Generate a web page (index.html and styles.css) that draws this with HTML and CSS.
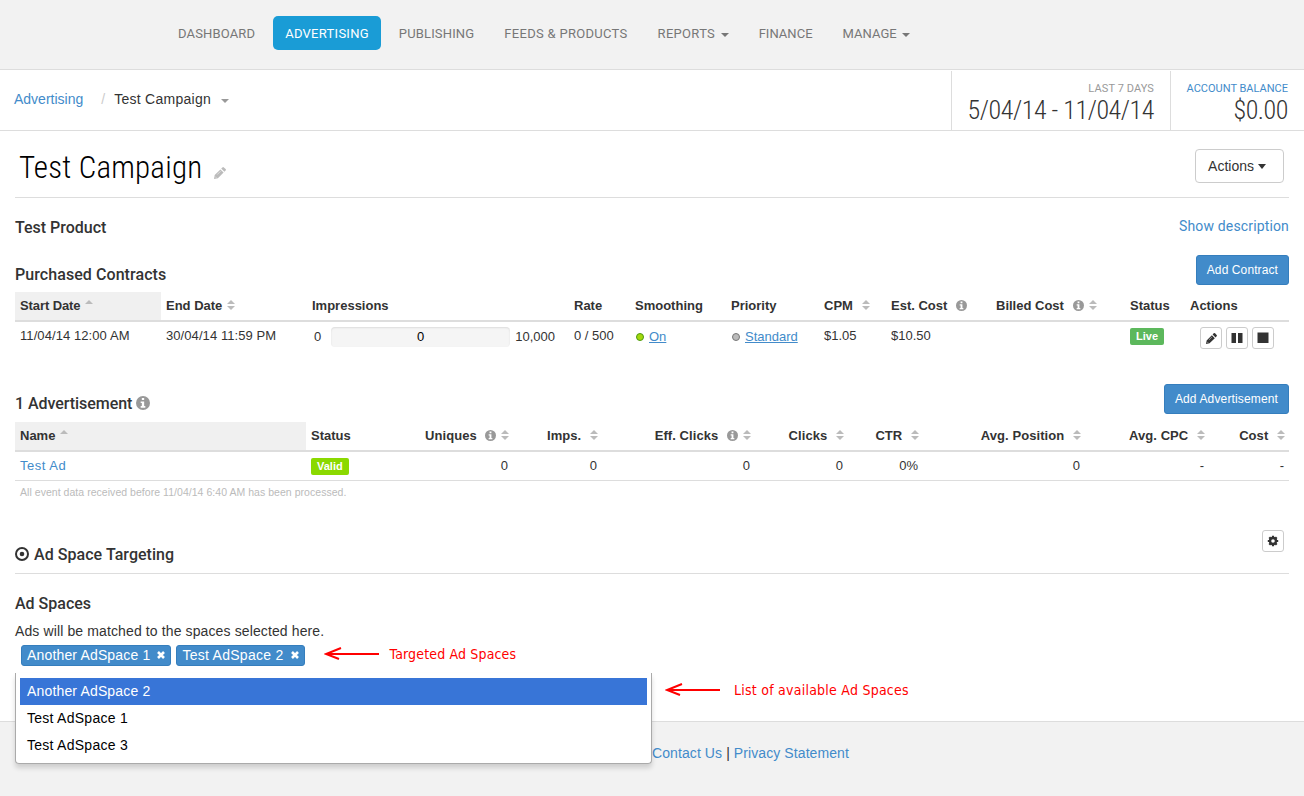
FILE: index.html
```html
<!DOCTYPE html>
<html lang="en">
<head>
    <meta charset="UTF-8">
    <meta name="viewport" content="width=device-width, initial-scale=1.0">
    <title>Test Campaign</title>
    <link rel="stylesheet" href="styles.css">
</head>
<body>
    <svg class="sprite">
        <symbol id="pencil" viewBox="0 0 12 12">
            <path d="M0 12l.7-3.9L6.4 2.4l3.2 3.2L3.9 11.3zM7.2 1.6L8.4.4q.8-.7 1.5 0l1.7 1.7q.7.7 0 1.5l-1.2 1.2z"/>
            <path d="M1.2 9.6l1.2 1.2M3.2 7.6l3.4-3.4" stroke="#fff" stroke-width=".5"/>
        </symbol>
        <symbol id="info" viewBox="0 0 12 12">
            <circle cx="6" cy="6" r="6"/>
            <path fill="#fff" d="M5 1.7h2v1.8H5zM4 4.7h3v3.9h1v1.4H4V8.6h1V6H4z"/>
        </symbol>
        <symbol id="sort" viewBox="0 0 8 10">
            <path d="M0 4l4-4 4 4zM0 6h8l-4 4z"/>
        </symbol>
        <symbol id="asc" viewBox="0 0 8 10">
            <path d="M0 4l4-4 4 4z"/>
        </symbol>
        <symbol id="close" viewBox="0 0 8 8">
            <path d="M1 1l6 6M7 1L1 7" stroke="#fff" stroke-width="2.6"/>
        </symbol>
        <symbol id="arrow" viewBox="0 0 56 16">
            <path d="M55 8H2M17 2L2 8l13 5" fill="none" stroke="#f00" stroke-width="2"/>
        </symbol>
    </svg>

    <nav class="navbar">
        <a>DASHBOARD</a>
        <a class="active">ADVERTISING</a>
        <a>PUBLISHING</a>
        <a class="wide">FEEDS &amp; PRODUCTS</a>
        <a class="wide">REPORTS <i class="caret"></i></a>
        <a class="tight">FINANCE</a>
        <a class="tight">MANAGE <i class="caret"></i></a>
    </nav>

    <div class="subbar">
        <div class="breadcrumb">
            <a class="link">Advertising</a>
            <span class="slash">/</span>
            <span class="current">Test Campaign</span>
            <i class="caret"></i>
        </div>
        <div class="stat stat-date">
            <small>LAST 7 DAYS</small>
            <strong>5/04/14 - 11/04/14</strong>
        </div>
        <div class="stat stat-balance">
            <small class="link">ACCOUNT BALANCE</small>
            <strong>$0.00</strong>
        </div>
    </div>

    <main class="content">
        <header class="page-header">
            <h1>Test Campaign</h1>
            <svg class="edit"><use href="#pencil"/></svg>
            <button class="btn">Actions <i class="caret"></i></button>
        </header>

        <div class="product">
            <h4>Test Product</h4>
            <a class="link">Show description</a>
        </div>

        <section class="contracts">
            <div class="section-head">
                <h4>Purchased Contracts</h4>
                <button class="btn btn-primary">Add Contract</button>
            </div>
            <table>
                <colgroup>
                    <col class="w146"><col class="w146"><col class="w262"><col class="w61"><col class="w96"><col class="w93">
                    <col class="w67"><col class="w105"><col class="w134"><col class="w60"><col class="w104">
                </colgroup>
                <thead>
                    <tr>
                        <th class="sorted">Start Date<svg class="sort"><use href="#asc"/></svg></th>
                        <th>End Date<svg class="sort"><use href="#sort"/></svg></th>
                        <th>Impressions</th>
                        <th>Rate</th>
                        <th>Smoothing</th>
                        <th>Priority</th>
                        <th>CPM <svg class="sort"><use href="#sort"/></svg></th>
                        <th>Est. Cost <svg class="info"><use href="#info"/></svg></th>
                        <th>Billed Cost <svg class="info"><use href="#info"/></svg><svg class="sort"><use href="#sort"/></svg></th>
                        <th>Status</th>
                        <th>Actions</th>
                    </tr>
                </thead>
                <tbody>
                    <tr>
                        <td class="date">11/04/14 12:00 AM</td>
                        <td class="date">30/04/14 11:59 PM</td>
                        <td>
                            <div class="impressions">
                                <span>0</span>
                                <div class="progress">0</div>
                                <span>10,000</span>
                            </div>
                        </td>
                        <td>0 / 500</td>
                        <td><div class="state"><i class="dot dot-on"></i><a>On</a></div></td>
                        <td><div class="state"><i class="dot"></i><a>Standard</a></div></td>
                        <td>$1.05</td>
                        <td>$10.50</td>
                        <td></td>
                        <td><span class="label label-live">Live</span></td>
                        <td>
                            <div class="row-actions">
                                <button class="btn-icon"><svg class="small" viewBox="0 0 12 12"><use href="#pencil"/></svg></button>
                                <button class="btn-icon"><svg viewBox="0 0 12 12"><path d="M.5 1H5v10H.5zM7 1h4.5v10H7z"/></svg></button>
                                <button class="btn-icon"><svg viewBox="0 0 12 12"><path d="M.5 .5h11V11H.5z"/></svg></button>
                            </div>
                        </td>
                    </tr>
                </tbody>
            </table>
        </section>

        <section class="ads">
            <div class="section-head">
                <h4>1 Advertisement <svg class="info info-lg"><use href="#info"/></svg></h4>
                <button class="btn btn-primary">Add Advertisement</button>
            </div>
            <table>
                <colgroup>
                    <col class="w291"><col class="w114"><col class="w93"><col class="w89"><col class="w153">
                    <col class="w93"><col class="w75"><col class="w162"><col class="w124"><col class="w80">
                </colgroup>
                <thead>
                    <tr>
                        <th class="sorted">Name<svg class="sort"><use href="#asc"/></svg></th>
                        <th>Status</th>
                        <th class="num">Uniques <svg class="info"><use href="#info"/></svg><svg class="sort"><use href="#sort"/></svg></th>
                        <th class="num">Imps. <svg class="sort"><use href="#sort"/></svg></th>
                        <th class="num">Eff. Clicks <svg class="info"><use href="#info"/></svg><svg class="sort"><use href="#sort"/></svg></th>
                        <th class="num">Clicks <svg class="sort"><use href="#sort"/></svg></th>
                        <th class="num">CTR <svg class="sort"><use href="#sort"/></svg></th>
                        <th class="num">Avg. Position <svg class="sort"><use href="#sort"/></svg></th>
                        <th class="num">Avg. CPC <svg class="sort"><use href="#sort"/></svg></th>
                        <th class="num">Cost <svg class="sort"><use href="#sort"/></svg></th>
                    </tr>
                </thead>
                <tbody>
                    <tr>
                        <td><a class="link ad-name">Test Ad</a></td>
                        <td><span class="label label-valid">Valid</span></td>
                        <td class="num">0</td>
                        <td class="num">0</td>
                        <td class="num">0</td>
                        <td class="num">0</td>
                        <td class="num">0%</td>
                        <td class="num">0</td>
                        <td class="num">-</td>
                        <td class="num">-</td>
                    </tr>
                </tbody>
            </table>
            <p class="note">All event data received before 11/04/14 6:40 AM has been processed.</p>
        </section>

        <section class="targeting">
            <div class="targeting-head">
                <h4>
                    <svg class="target" viewBox="0 0 14 14"><circle cx="7" cy="7" r="6" fill="none" stroke="#333" stroke-width="2"/><circle cx="7" cy="7" r="2.3"/></svg>
                    Ad Space Targeting
                </h4>
                <button class="btn-icon"><svg viewBox="0 0 12 12"><circle cx="6" cy="6" r="3" fill="none" stroke="#333" stroke-width="2.4"/><path d="M6 .8v1.7M6 9.5v1.7M.8 6h1.7M9.5 6h1.7M2.3 2.3l1.3 1.3M8.4 8.4l1.3 1.3M2.3 9.7l1.3-1.3M8.4 3.6l1.3-1.3" stroke="#333" stroke-width="2.2"/></svg></button>
            </div>
            <h4 class="spaces-title">Ad Spaces</h4>
            <p class="help">Ads will be matched to the spaces selected here.</p>
            <div class="select">
                <div class="tags">
                    <span class="tag">Another AdSpace 1<svg><use href="#close"/></svg></span>
                    <span class="tag tag-wide">Test AdSpace 2<svg><use href="#close"/></svg></span>
                    <div class="hint"><svg><use href="#arrow"/></svg>Targeted Ad Spaces</div>
                </div>
                <ul class="dropdown">
                    <li class="highlighted">Another AdSpace 2</li>
                    <li>Test AdSpace 1</li>
                    <li>Test AdSpace 3</li>
                </ul>
                <div class="hint hint-list"><svg><use href="#arrow"/></svg>List of available Ad Spaces</div>
            </div>
        </section>
    </main>

    <footer class="footer">
        <a class="link">Contact Us</a> | <a class="link">Privacy Statement</a>
    </footer>
</body>
</html>
```
FILE: styles.css
```css
* {
    box-sizing: border-box;
}

body {
    margin: 0;
    min-height: 796px;
    display: flex;
    flex-direction: column;
    font-family: "Liberation Sans", Arial, sans-serif;
    font-size: 14px;
    line-height: 20px;
    color: #333;
    background: #fff;
}

h1, h4, p, ul {
    margin: 0;
    padding: 0;
}

h4 {
    font-family: Roboto, sans-serif;
    font-size: 16px;
    font-weight: 500;
    line-height: 20px;
}

svg {
    fill: currentColor;
}

button {
    font-family: inherit;
    color: #333;
}

.sprite {
    display: none;
}

.link {
    color: #428bca;
}

.caret {
    display: inline-block;
    border: 4px solid transparent;
    border-top-color: currentColor;
    border-bottom: 0;
    vertical-align: middle;
}

/* top navigation */
.navbar {
    height: 70px;
    padding: 16px 0 0 166px;
    display: flex;
    gap: 6px;
    background: #f2f2f2;
    border-bottom: 1px solid #ddd;
    font-family: Roboto, sans-serif;
    font-size: 13px;
    letter-spacing: 0.15px;
    color: #777;
}

.navbar a {
    height: 34px;
    padding: 0 12px;
    line-height: 35px;
    border-radius: 5px;
    white-space: nowrap;
}

.navbar .active {
    background: #1a9cd6;
    letter-spacing: 0.27px;
    color: #fff;
}

.navbar .wide {
    letter-spacing: 0.3px;
}

.navbar .tight {
    letter-spacing: 0.03px;
}

.navbar .caret {
    margin-left: 2px;
}

/* breadcrumb and stats */
.subbar {
    height: 61px;
    display: flex;
    border-bottom: 1px solid #ddd;
}

.breadcrumb {
    flex: 1;
    display: flex;
    align-items: center;
    padding: 0 0 3px 14px;
}

.breadcrumb .slash {
    margin: 0 9px 0 18px;
    color: #ccc;
}

.breadcrumb .current {
    letter-spacing: 0.27px;
}

.breadcrumb .caret {
    margin: 4px 0 0 10px;
    color: #999;
}

.stat {
    margin-top: 1px;
    padding: 9px 16px 0;
    border-left: 1px solid #ddd;
    display: flex;
    flex-direction: column;
    align-items: flex-end;
    font-family: Roboto, sans-serif;
    white-space: nowrap;
}

.stat-date {
    width: 219px;
}

.stat-balance {
    width: 134px;
}

.stat small {
    font-size: 11px;
    line-height: 18px;
}

.stat-date small {
    letter-spacing: 0.1px;
    color: #999;
}

.stat strong {
    font-family: "Roboto Condensed", Roboto, sans-serif;
    font-stretch: 75%;
    font-weight: 300;
    font-size: 26px;
    line-height: 25px;
    letter-spacing: -0.45px;
}

/* page content */
.content {
    height: 590px;
    padding: 0 15px;
}

.page-header {
    height: 67px;
    padding: 0 5px 0 4px;
    display: flex;
    align-items: flex-start;
    border-bottom: 1px solid #ddd;
}

.page-header h1 {
    margin-top: 17px;
    font-family: "Roboto Condensed", Roboto, sans-serif;
    font-stretch: 75%;
    font-weight: 300;
    font-size: 31px;
    line-height: 40px;
    letter-spacing: 0.2px;
    color: #000;
}

.page-header .edit {
    width: 12px;
    height: 12px;
    margin: 36px auto 0 12px;
    color: #bbb;
}

.btn {
    width: 89px;
    height: 34px;
    margin-top: 18px;
    padding: 0 5px 0 0;
    background: #fff;
    border: 1px solid #ccc;
    border-radius: 4px;
    font-size: 14px;
    white-space: nowrap;
}

.btn .caret {
    margin-top: -2px;
    border-width: 5px 4.5px 0;
}

.btn-primary {
    width: auto;
    height: 30px;
    margin: 0;
    padding: 0 10px;
    background: #428bca;
    border-color: #357ebd;
    border-radius: 3px;
    font-size: 12px;
    letter-spacing: 0.1px;
    color: #fff;
}

.product {
    height: 57px;
    padding-top: 19px;
    display: flex;
    justify-content: space-between;
    align-items: flex-start;
}

.product h4 {
    padding-top: 1px;
}

.product .link {
    font-family: Roboto, sans-serif;
    line-height: 18px;
    letter-spacing: 0.15px;
}

.section-head {
    height: 37px;
    display: flex;
    justify-content: space-between;
}

.section-head h4 {
    padding-top: 10px;
    letter-spacing: 0.07px;
}

.contracts {
    height: 129px;
}

.ads {
    height: 146px;
}

.ads .section-head {
    height: 38px;
}

.ads .section-head h4 {
    letter-spacing: -0.05px;
}

.ads .btn-primary {
    letter-spacing: 0.14px;
}

table {
    width: 1274px;
    table-layout: fixed;
    border-collapse: separate;
    border-spacing: 0;
    font-size: 13px;
}

th, td {
    padding: 0 5px;
    text-align: left;
    vertical-align: top;
    white-space: nowrap;
}

th {
    height: 30px;
    line-height: 27px;
    border-bottom: 2px solid #ddd;
}

td {
    height: 29px;
    line-height: 28px;
}

.ads td {
    border-bottom: 1px solid #ddd;
}

.sorted {
    background: #f0f0f0;
}

.contracts .sorted {
    letter-spacing: -0.1px;
}

.num {
    text-align: right;
}

th.num {
    padding-right: 4px;
    letter-spacing: 0.07px;
}

.date {
    letter-spacing: 0.08px;
}

.ad-name {
    letter-spacing: 0.5px;
}

.w60 { width: 60px; }
.w61 { width: 61px; }
.w67 { width: 67px; }
.w75 { width: 75px; }
.w80 { width: 80px; }
.w89 { width: 89px; }
.w93 { width: 93px; }
.w96 { width: 96px; }
.w104 { width: 104px; }
.w105 { width: 105px; }
.w114 { width: 114px; }
.w124 { width: 124px; }
.w134 { width: 134px; }
.w146 { width: 146px; }
.w153 { width: 153px; }
.w162 { width: 162px; }
.w262 { width: 262px; }
.w291 { width: 291px; }

.sort {
    width: 8px;
    height: 10px;
    margin-left: 5px;
    vertical-align: 0;
    color: #bbb;
}

.info {
    width: 11px;
    height: 11px;
    margin-left: 5px;
    vertical-align: -1px;
    color: #999;
}

.info-lg {
    width: 14px;
    height: 14px;
    margin-left: 0;
    vertical-align: -1px;
}

.impressions {
    display: flex;
    align-items: center;
    height: 30px;
    padding-left: 2px;
}

.progress {
    width: 179px;
    height: 20px;
    margin: 0 5px 0 10px;
    background: #f5f5f5;
    border-radius: 4px;
    box-shadow: inset 0 1px 2px rgba(0, 0, 0, 0.1);
    line-height: 20px;
    text-align: center;
    color: #000;
}

.state {
    display: flex;
    align-items: center;
    gap: 5px;
    height: 30px;
    padding-left: 1px;
    color: #428bca;
    text-decoration: underline;
}

.dot {
    width: 8px;
    height: 8px;
    border: 1px solid #777;
    border-radius: 50%;
    background: #bbb;
}

.dot-on {
    border-color: #4c9a10;
    background: #a4d80c;
}

.label {
    display: inline-block;
    height: 17px;
    padding: 0 6px;
    border-radius: 2px;
    font-size: 11px;
    font-weight: bold;
    line-height: 17px;
    color: #fff;
}

.label-live {
    background: #5cb85c;
}

.label-valid {
    background: #8bd900;
}

.row-actions {
    display: flex;
    gap: 4px;
    padding: 5px 0 0 10px;
}

.btn-icon {
    width: 22px;
    height: 22px;
    padding: 0;
    display: flex;
    align-items: center;
    justify-content: center;
    background: #fff;
    border: 1px solid #ccc;
    border-radius: 3px;
}

.btn-icon svg {
    width: 12px;
    height: 12px;
}

.btn-icon .small {
    width: 11px;
    height: 11px;
}

.note {
    padding-left: 5px;
    font-size: 10.5px;
    line-height: 22px;
    letter-spacing: 0.04px;
    color: #bbb;
}

/* ad space targeting */
.targeting-head {
    height: 44px;
    padding-right: 5px;
    display: flex;
    justify-content: space-between;
    border-bottom: 1px solid #ddd;
}

.targeting-head h4 {
    display: flex;
    align-items: center;
    gap: 5px;
    height: 50px;
    letter-spacing: 0.05px;
}

.target {
    width: 14px;
    height: 14px;
    margin-top: -2px;
}

.spaces-title {
    margin: 20px 0 7px;
}

.help {
    letter-spacing: 0.12px;
}

.select {
    position: relative;
    width: 637px;
    letter-spacing: 0.16px;
}

.tags {
    height: 32px;
    padding: 4px 0 0 6px;
    display: flex;
    gap: 5px;
    white-space: nowrap;
}

.tag {
    height: 21px;
    padding: 0 5px 1px;
    display: flex;
    align-items: center;
    gap: 7px;
    background: #428bca;
    border: 1px solid #357ebd;
    border-radius: 3px;
    line-height: 18px;
    color: #fff;
}

.tag-wide {
    letter-spacing: 0.28px;
}

.tag svg {
    width: 8px;
    height: 8px;
}

.hint {
    height: 18px;
    margin-left: 14px;
    display: flex;
    align-items: center;
    gap: 10px;
    font-family: "DejaVu Sans Condensed", "DejaVu Sans", sans-serif;
    font-stretch: condensed;
    font-size: 14px;
    white-space: nowrap;
    color: #f00;
}

.hint svg {
    width: 56px;
    height: 16px;
}

.hint-list {
    position: absolute;
    left: 650px;
    top: 40px;
    margin: 0;
    gap: 13px;
    letter-spacing: 0.24px;
}

.dropdown {
    position: absolute;
    top: 32px;
    width: 637px;
    height: 91px;
    padding: 5px 4px;
    list-style: none;
    background: #fff;
    border: 1px solid #aaa;
    border-top: 0;
    border-radius: 0 0 4px 4px;
    box-shadow: 0 4px 5px rgba(0, 0, 0, 0.15);
    letter-spacing: 0.26px;
    color: #000;
}

.dropdown li {
    height: 27px;
    padding-left: 7px;
    line-height: 27px;
}

.dropdown .highlighted {
    background: #3875d7;
    letter-spacing: 0.16px;
    color: #fff;
}

.footer {
    flex: 1;
    padding: 21px 0 0 652px;
    background: #f2f2f2;
    border-top: 1px solid #ddd;
    letter-spacing: 0.09px;
}
```
